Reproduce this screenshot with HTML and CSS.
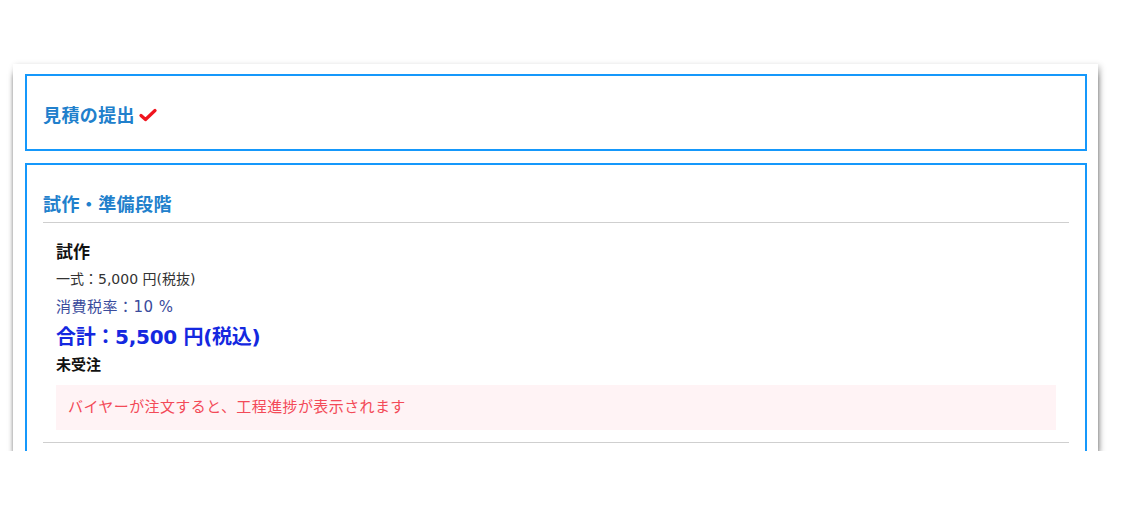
FILE: index.html
```html
<!DOCTYPE html>
<html>
<head>
    <meta charset="utf-8">
    <title>工程</title>
    <link rel="stylesheet" href="styles.css">
</head>
<body>
    <div class="panel">
        <div class="step">
            <h3 class="step_title">見積の提出
                <svg class="check" width="18" height="14" viewBox="0 0 18 14"><path d="M2 7.5 L6.5 11.5 L16 2.5" fill="none" stroke="#f0141e" stroke-width="3.2" stroke-linecap="round" stroke-linejoin="round"/></svg>
            </h3>
        </div>
        <div class="step open">
            <h3 class="step_title ruled">試作・準備段階</h3>
            <div class="item">
                <div class="item_name">試作</div>
                <div class="price">一式：5,000 円(税抜)</div>
                <div class="tax">消費税率：10 %</div>
                <div class="total">合計：5,500 円(税込)</div>
                <div class="status">未受注</div>
                <div class="notice">バイヤーが注文すると、工程進捗が表示されます</div>
            </div>
            <div class="rule"></div>
        </div>
    </div>
</body>
</html>
```

FILE: styles.css
```css
html, body {
    margin: 0;
    background: #fff;
    font-family: "DejaVu Sans", "Noto Sans CJK JP", sans-serif;
}
.panel {
    margin: 64px 42px 0 13px;
    padding: 10px 11px 0 12px;
    height: 377px;
    overflow: hidden;
    background: #fff;
    box-shadow: 0 8px 6px -2px rgba(0, 0, 0, 0.85), 2px 2px 6px rgba(0, 0, 0, 0.25);
}
.step {
    border: 2px solid #1598fb;
    padding: 0 16px;
    margin-bottom: 12px;
}
.step.open {
    padding-bottom: 60px;
}
.step_title {
    margin: 0;
    padding: 26px 0 23px 0;
    font-family: "Noto Sans CJK JP", sans-serif;
    font-size: 18px;
    letter-spacing: 0.4px;
    line-height: 24px;
    font-weight: bold;
    color: #2180cc;
    display: flex;
    align-items: center;
    gap: 4px;
}
.step_title.ruled {
    padding-bottom: 7px;
    border-bottom: 1px solid #cfcfcf;
}
.check {
    margin-top: 1px;
}
.item {
    padding: 17px 13px 12px 13px;
}
.item_name {
    font-size: 17px;
    font-weight: bold;
    color: #111;
    line-height: 25px;
}
.price {
    font-size: 14px;
    color: #333;
    line-height: 28px;
}
.tax {
    font-size: 15px;
    letter-spacing: 0.5px;
    color: #3a4b9c;
    line-height: 28px;
}
.total {
    font-size: 20px;
    letter-spacing: -0.3px;
    font-weight: bold;
    color: #1428e0;
    line-height: 32px;
}
.status {
    font-size: 15px;
    font-weight: bold;
    color: #111;
    line-height: 24px;
}
.notice {
    margin-top: 8px;
    background: #fff3f5;
    color: #f34a58;
    font-size: 15px;
    letter-spacing: 0.4px;
    line-height: 45px;
    padding: 0 12px;
}
.rule {
    border-bottom: 1px solid #cfcfcf;
}
```
